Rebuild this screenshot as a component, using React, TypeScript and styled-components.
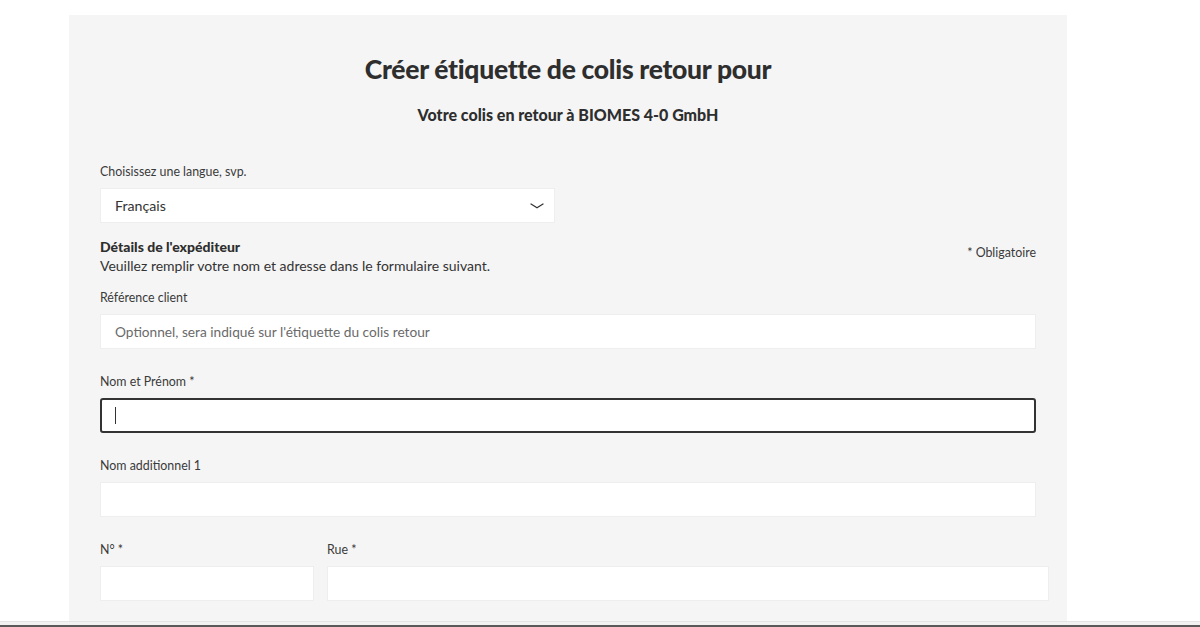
import styled, { createGlobalStyle } from 'styled-components';

const GlobalStyle = createGlobalStyle`
    html, body {
        margin: 0;
        padding: 0;
        background-color: #FFFFFF;
        overflow: hidden;
    }

    body {
        font-family: Lato, "Open Sans", "Noto Sans", sans-serif;
        color: #333333;
    }

    * {
        box-sizing: border-box;
    }
`;

const Page = styled.div`
    height: 627px;
    display: flex;
    flex-direction: column;
`;

const Panel = styled.main`
    flex: 1;
    width: 998px;
    margin: 15px 0 0 69px;
    padding: 0 31px;
    background-color: #F5F5F5;
    overflow: hidden;
`;

const BottomBar = styled.div`
    height: 6px;
    flex-shrink: 0;
    border-top: 1px solid #E4E4E4;
    background: linear-gradient(#F2F2F2, #F2F2F2 60%, #5A5A5A 60%);
`;

const Title = styled.h1`
    margin: 37px 0 0;
    text-align: center;
    font-size: 26.5px;
    line-height: 34px;
    letter-spacing: -0.3px;
    font-weight: 900;
    color: #2E2E2E;
`;

const Subtitle = styled.h2`
    margin: 18px 0 0;
    text-align: center;
    font-size: 16px;
    line-height: 22px;
    font-weight: 900;
    color: #2E2E2E;
`;

const Label = styled.label`
    display: block;
    font-size: 12.4px;
    line-height: 16px;
    color: #3A3A3A;
    margin-bottom: 8px;
`;

const LanguageField = styled.div`
    margin-top: 38px;
    width: 455px;
`;

const Select = styled.div`
    height: 35px;
    display: flex;
    align-items: center;
    justify-content: space-between;
    padding: 0 9px 0 14px;
    background-color: #FFFFFF;
    border: 1px solid #EEEEEE;
    font-size: 14.2px;
    color: #333333;
`;

const SectionHead = styled.div`
    margin-top: 14px;
    display: flex;
    justify-content: space-between;
    align-items: flex-start;
`;

const SectionTitle = styled.div`
    font-size: 14px;
    line-height: 19px;
    font-weight: 900;
    color: #2E2E2E;
`;

const SectionText = styled.div`
    font-size: 14px;
    line-height: 19px;
    color: #333333;
`;

const Required = styled.div`
    margin-top: 8px;
    font-size: 12.4px;
    color: #3A3A3A;
`;

const Field = styled.div<{ $top?: number }>`
    margin-top: ${(p) => p.$top ?? 25}px;
`;

const Input = styled.input`
    display: block;
    width: 100%;
    height: 35px;
    padding: 0 14px;
    font-family: inherit;
    font-size: 13.7px;
    color: #333333;
    background-color: #FFFFFF;
    border: 1px solid #EEEEEE;
    border-radius: 0;
    outline: none;

    &::placeholder {
        color: #6A6A6A;
    }
`;

const FocusedInput = styled.div`
    height: 35px;
    display: flex;
    align-items: center;
    padding: 0 13px;
    background-color: #FFFFFF;
    border: 2px solid #333333;
    border-radius: 3px;
`;

const Caret = styled.span`
    display: block;
    width: 1px;
    height: 17px;
    background-color: #333333;
`;

const AddressRow = styled.div`
    margin-top: 25px;
    display: grid;
    grid-template-columns: 214px 722px;
    column-gap: 13px;
`;

function Chevron() {
    return (
        <svg width="16" height="10" viewBox="0 0 16 10" fill="none">
            <path d="M2 3 L8 6.8 L14 3" stroke="#333333" strokeWidth="1.3" strokeLinecap="round" strokeLinejoin="round" />
        </svg>
    );
}

function App() {
    return (
        <Page>
            <GlobalStyle />
            <Panel>
                <Title>Créer étiquette de colis retour pour</Title>
                <Subtitle>Votre colis en retour à BIOMES 4-0 GmbH</Subtitle>

                <LanguageField>
                    <Label>Choisissez une langue, svp.</Label>
                    <Select>
                        <span>Français</span>
                        <Chevron />
                    </Select>
                </LanguageField>

                <SectionHead>
                    <div>
                        <SectionTitle>Détails de l'expéditeur</SectionTitle>
                        <SectionText>Veuillez remplir votre nom et adresse dans le formulaire suivant.</SectionText>
                    </div>
                    <Required>* Obligatoire</Required>
                </SectionHead>

                <Field $top={15}>
                    <Label>Référence client</Label>
                    <Input placeholder="Optionnel, sera indiqué sur l'étiquette du colis retour" />
                </Field>

                <Field>
                    <Label>Nom et Prénom *</Label>
                    <FocusedInput>
                        <Caret />
                    </FocusedInput>
                </Field>

                <Field>
                    <Label>Nom additionnel 1</Label>
                    <Input />
                </Field>

                <AddressRow>
                    <div>
                        <Label>N° *</Label>
                        <Input />
                    </div>
                    <div>
                        <Label>Rue *</Label>
                        <Input />
                    </div>
                </AddressRow>
            </Panel>
            <BottomBar />
        </Page>
    );
}

export default App;
